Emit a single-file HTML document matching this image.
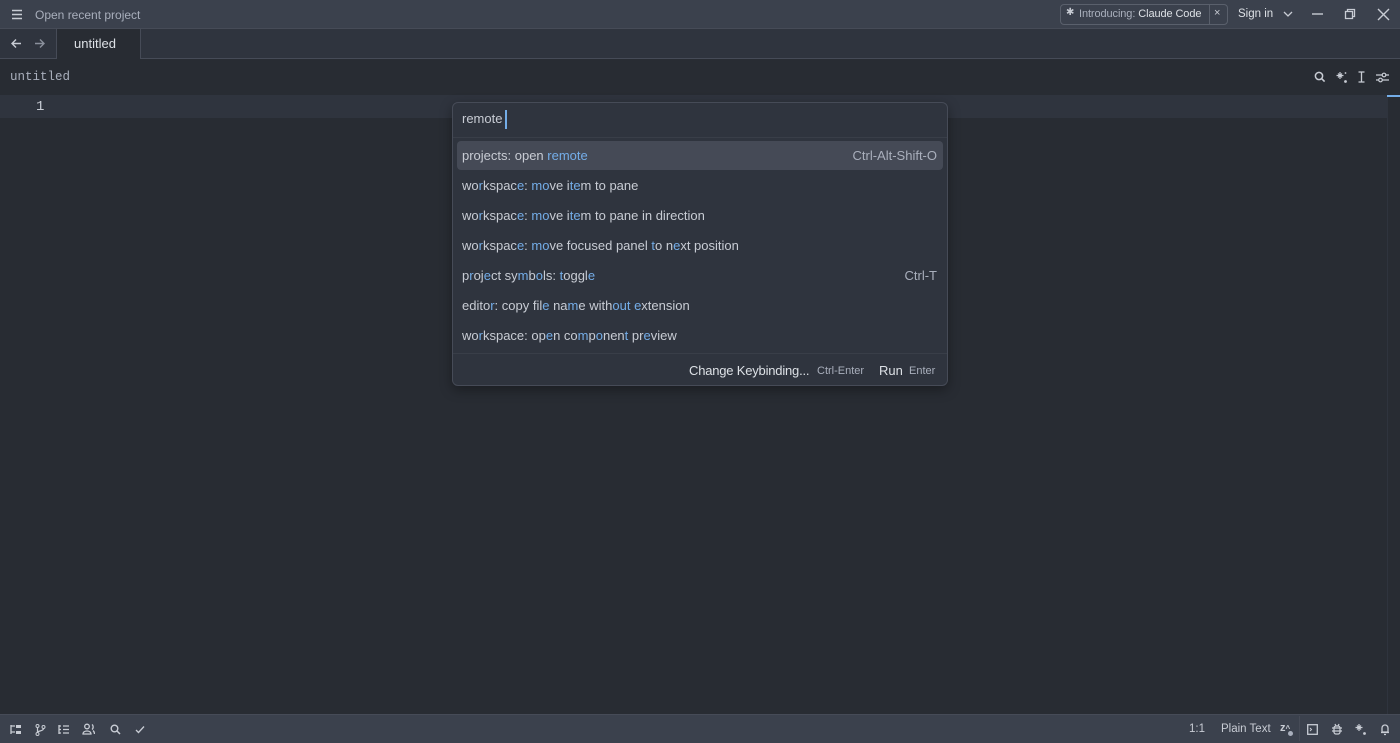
<!DOCTYPE html>
<html><head><meta charset="utf-8"><style>
*{margin:0;padding:0;box-sizing:border-box}
body{width:1400px;height:743px;background:#282c33;font-family:"Liberation Sans",sans-serif;color:#c8ccd4;position:relative;overflow:hidden;font-size:13px}
.abs{position:absolute}
#title{left:0;top:0;width:1400px;height:29px;background:#3b414d;border-bottom:1px solid #464b57}
#tabs{left:0;top:29px;width:1400px;height:30px;background:#2f343e;border-bottom:1px solid #464b57}
#tab{left:56px;top:29px;width:85px;height:30px;background:#282c33;border-left:1px solid #464b57;border-right:1px solid #464b57}
#crumb{left:0;top:59px;width:1400px;height:37px;background:#282c33;border-bottom:1px solid #2f343e}
#line{left:0;top:96px;width:1388px;height:22px;background:#2f343e}
#status{left:0;top:714px;width:1400px;height:29px;background:#3b414d;border-top:1px solid #464b57}
#pal{left:452px;top:102px;width:496px;height:284px;background:#2f343e;border:1px solid #464b57;border-radius:6px;box-shadow:0 4px 12px rgba(0,0,0,.35)}
.row{position:absolute;left:4px;width:486px;height:29px;line-height:29px;padding-left:5px;font-size:13px;color:#c8ccd4}
.row.sel{background:#454a56;border-radius:4px}
.row b{font-weight:normal;color:#74ade8}
.kb{position:absolute;right:6px;top:0;color:#a9afbc}
svg{position:absolute}
</style></head><body>
<div id="title" class="abs"></div>
<svg style="left:11px;top:9px" width="12" height="11" viewBox="0 0 12 11"><path d="M1 1.5h10M1 5.5h10M1 9.5h10" stroke="#c8ccd4" stroke-width="1.4"/></svg>
<div class="abs" style="left:35px;top:8px;font-size:12px;color:#a9afbc">Open recent project</div>
<div class="abs" style="left:1060px;top:4px;width:168px;height:21px;border:1px solid #5a606c;border-radius:4px"></div>
<div class="abs" style="left:1209px;top:5px;width:1px;height:19px;background:#5a606c"></div>
<div class="abs" style="left:1066px;top:7px;font-size:10px;color:#c8ccd4">✱</div>
<div class="abs" style="left:1079px;top:8px;font-size:11px;color:#a9afbc;letter-spacing:-0.1px">Introducing: <span style="color:#dce0e5">Claude Code</span></div>
<div class="abs" style="left:1214px;top:7px;font-size:11px;color:#c8ccd4">×</div>
<div class="abs" style="left:1238px;top:8px;font-size:11.5px;color:#dce0e5">Sign in</div>
<svg style="left:1283px;top:10px" width="10" height="8"><path d="M1 2l4 4 4-4" stroke="#c8ccd4" fill="none" stroke-width="1.3"/></svg>
<svg style="left:1312px;top:13px" width="12" height="2"><path d="M0 1h11" stroke="#c8ccd4" stroke-width="1.4"/></svg>
<svg style="left:1344px;top:8px" width="12" height="12"><path d="M1.5 3.5h7v7h-7zM3.5 3.5v-2h7v7h-2" stroke="#c8ccd4" fill="none" stroke-width="1.3"/></svg>
<svg style="left:1377px;top:8px" width="13" height="13"><path d="M1 1l11 11M12 1L1 12" stroke="#c8ccd4" stroke-width="1.4"/></svg>
<div id="tabs" class="abs"></div>
<div id="tab" class="abs"></div>
<svg style="left:10px;top:38px" width="12" height="11"><path d="M11 5.5H2M6 1.5l-4 4 4 4" stroke="#c8ccd4" fill="none" stroke-width="1.4"/></svg>
<svg style="left:34px;top:38px" width="12" height="11"><path d="M1 5.5h9M6 1.5l4 4-4 4" stroke="#8a909c" fill="none" stroke-width="1.4"/></svg>
<div class="abs" style="left:74px;top:36px;font-size:13px;color:#dce0e5">untitled</div>
<div id="crumb" class="abs"></div>
<div class="abs" style="left:10px;top:70px;font-family:'Liberation Mono',monospace;font-size:12.5px;color:#a9afbc">untitled</div>
<svg style="left:1314px;top:71px" width="12" height="12"><circle cx="5" cy="5" r="3.6" stroke="#c8ccd4" fill="none" stroke-width="1.5"/><path d="M7.6 7.6l3 3" stroke="#c8ccd4" stroke-width="1.6"/></svg>
<svg style="left:1335px;top:71px" width="13" height="13"><path d="M5 1v7M1.5 4.5h7M3 2.5l4 4M7 2.5l-4 4" stroke="#c8ccd4" stroke-width="1.2"/><circle cx="10.5" cy="10.5" r="1.4" fill="#c8ccd4"/><circle cx="10.5" cy="2" r="0.9" fill="#c8ccd4"/></svg>
<svg style="left:1357px;top:71px" width="9" height="12"><path d="M4.5 1v10M1.5 1h6M1.5 11h6" stroke="#c8ccd4" stroke-width="1.3"/></svg>
<svg style="left:1376px;top:72px" width="13" height="11"><path d="M0 3h13M0 8h13" stroke="#c8ccd4" stroke-width="1.2"/><circle cx="8" cy="3" r="1.8" fill="#282c33" stroke="#c8ccd4" stroke-width="1.2"/><circle cx="4.5" cy="8" r="1.8" fill="#282c33" stroke="#c8ccd4" stroke-width="1.2"/></svg>
<div id="line" class="abs"></div>
<div class="abs" style="left:1387px;top:95px;width:13px;height:2px;background:#74ade8"></div>
<div class="abs" style="left:1387px;top:97px;width:1px;height:617px;background:#2f343e"></div>
<div class="abs" style="left:36px;top:99px;font-family:'Liberation Mono',monospace;font-size:14px;color:#c8ccd4">1</div>
<div id="pal" class="abs">
<div class="abs" style="left:9px;top:8px;font-size:13px;color:#c8ccd4">remote</div>
<div class="abs" style="left:52px;top:7px;width:1.5px;height:19px;background:#74ade8"></div>
<div class="abs" style="left:0;top:34px;width:494px;height:1px;background:#393e48"></div>
<div class="row sel" style="top:38px">projects: open <b>remote</b><span class="kb">Ctrl-Alt-Shift-O</span></div>
<div class="row" style="top:68px">wo<b>r</b>kspac<b>e</b>: <b>mo</b>ve i<b>te</b>m to pane</div>
<div class="row" style="top:98px">wo<b>r</b>kspac<b>e</b>: <b>mo</b>ve i<b>te</b>m to pane in direction</div>
<div class="row" style="top:128px">wo<b>r</b>kspac<b>e</b>: <b>mo</b>ve focused panel <b>t</b>o n<b>e</b>xt position</div>
<div class="row" style="top:158px">p<b>r</b>oj<b>e</b>ct sy<b>m</b>b<b>o</b>ls: <b>t</b>oggl<b>e</b><span class="kb">Ctrl-T</span></div>
<div class="row" style="top:188px">edito<b>r</b>: copy fil<b>e</b> na<b>m</b>e with<b>out</b> <b>e</b>xtension</div>
<div class="row" style="top:218px">wo<b>r</b>kspace: op<b>e</b>n co<b>m</b>p<b>o</b>nen<b>t</b> pr<b>e</b>view</div>
<div class="abs" style="left:0;top:250px;width:494px;height:1px;background:#393e48"></div>
<div class="abs" style="left:236px;top:260px;font-size:13px;color:#dce0e5;letter-spacing:-0.2px">Change Keybinding...</div>
<div class="abs" style="left:364px;top:262px;font-size:11px;color:#a9afbc">Ctrl-Enter</div>
<div class="abs" style="left:426px;top:260px;font-size:13px;color:#dce0e5">Run</div>
<div class="abs" style="left:456px;top:262px;font-size:11px;color:#a9afbc">Enter</div>
</div>
<div id="status" class="abs"></div>
<svg style="left:10px;top:724px" width="12" height="11"><path d="M1 1v9M1 2h4M1 8h4" stroke="#c8ccd4" stroke-width="1.3" fill="none"/><rect x="6" y="1" width="5" height="3" fill="#c8ccd4"/><rect x="6" y="7" width="5" height="3" fill="#c8ccd4"/></svg>
<svg style="left:35px;top:724px" width="11" height="12"><circle cx="2.5" cy="2" r="1.5" stroke="#c8ccd4" fill="none"/><circle cx="8.5" cy="3" r="1.5" stroke="#c8ccd4" fill="none"/><circle cx="2.5" cy="10" r="1.5" stroke="#c8ccd4" fill="none"/><path d="M2.5 3.5v5M8.5 4.5c0 3-6 2-6 4" stroke="#c8ccd4" fill="none" stroke-width="1.2"/></svg>
<svg style="left:58px;top:724px" width="12" height="11"><path d="M1 1v9M1 2h2M1 5.5h2M1 9h2M5 2h6M5 5.5h6M5 9h6" stroke="#c8ccd4" stroke-width="1.3"/></svg>
<svg style="left:82px;top:723px" width="13" height="12"><circle cx="5" cy="3.5" r="2.3" stroke="#c8ccd4" fill="none" stroke-width="1.3"/><path d="M1 11c0-4 8-4 8 0zM10 1.5c1.5 1 1.5 4 0 5M11 7.5c1 1 1.5 2 1.5 3.5" stroke="#c8ccd4" fill="none" stroke-width="1.3"/></svg>
<svg style="left:110px;top:724px" width="11" height="11"><circle cx="4.5" cy="4.5" r="3.3" stroke="#c8ccd4" fill="none" stroke-width="1.4"/><path d="M7 7l3 3" stroke="#c8ccd4" stroke-width="1.5"/></svg>
<svg style="left:135px;top:725px" width="10" height="9"><path d="M1 5l2.5 2.5L9 1.5" stroke="#c8ccd4" fill="none" stroke-width="1.3"/></svg>
<div class="abs" style="left:1189px;top:723px;font-size:11.5px;color:#c8ccd4">1:1</div>
<div class="abs" style="left:1221px;top:723px;font-size:11.5px;color:#c8ccd4">Plain Text</div>
<div class="abs" style="left:1280px;top:722px;font-size:11px;font-weight:bold;color:#c8ccd4">z<span style="font-size:8px">^</span></div>
<div class="abs" style="left:1288px;top:731px;width:5px;height:5px;border-radius:50%;background:#a9afbc"></div>
<div class="abs" style="left:1299px;top:716px;width:1px;height:25px;background:#464b57"></div>
<svg style="left:1307px;top:724px" width="11" height="11"><rect x="0.7" y="0.7" width="9.6" height="9.6" stroke="#c8ccd4" fill="none" stroke-width="1.3"/><path d="M3 4l1.5 1.5L3 7" stroke="#c8ccd4" fill="none"/></svg>
<svg style="left:1331px;top:723px" width="12" height="13"><rect x="3" y="3" width="6" height="8" rx="2" stroke="#c8ccd4" fill="none" stroke-width="1.3"/><path d="M1 5h10M1 8h10M4 1l1 2M8 1l-1 2" stroke="#c8ccd4" stroke-width="1.2"/></svg>
<svg style="left:1354px;top:723px" width="13" height="13"><path d="M5 1v7M1.5 4.5h7M3 2.5l4 4M7 2.5l-4 4" stroke="#c8ccd4" stroke-width="1.2"/><circle cx="10.5" cy="10.5" r="1.4" fill="#c8ccd4"/></svg>
<svg style="left:1380px;top:723px" width="10" height="13"><path d="M2 9V5a3 3 0 016 0v4zM1 9.5h8M4 11.5h2" stroke="#c8ccd4" fill="none" stroke-width="1.3"/></svg>
</body></html>
